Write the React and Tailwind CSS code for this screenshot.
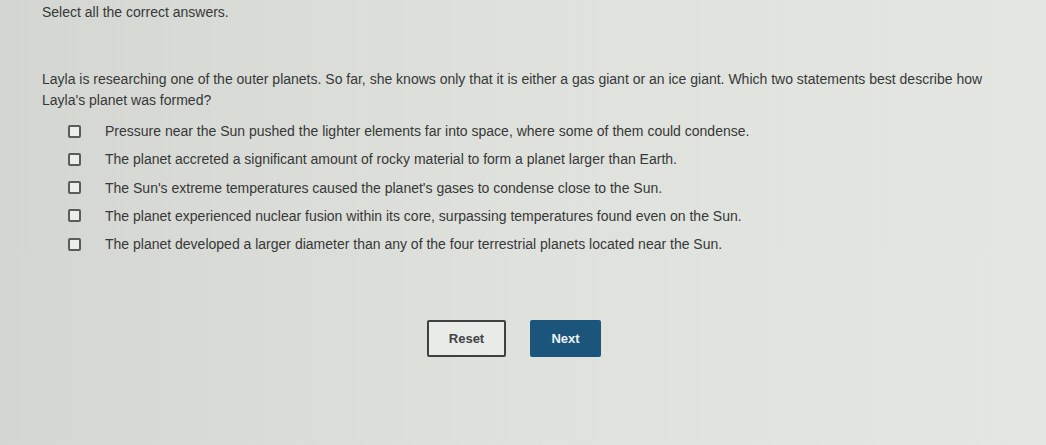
import React from "react";

const options = [
  "Pressure near the Sun pushed the lighter elements far into space, where some of them could condense.",
  "The planet accreted a significant amount of rocky material to form a planet larger than Earth.",
  "The Sun's extreme temperatures caused the planet's gases to condense close to the Sun.",
  "The planet experienced nuclear fusion within its core, surpassing temperatures found even on the Sun.",
  "The planet developed a larger diameter than any of the four terrestrial planets located near the Sun.",
];

export default function App() {
  return (
    <div
      className="w-[1046px] h-[445px] overflow-hidden bg-gradient-to-r from-[#d4d6d1] via-[#dfe1dc] to-[#e4e6e2] text-[#363838] text-[14px]"
      style={{ fontFamily: '"Liberation Sans", Arial, sans-serif' }}
    >
      <div className="pl-[42px] pt-[2px]">
        <p className="leading-[20px]">Select all the correct answers.</p>
        <p className="mt-[47px] leading-[21px] w-[950px]">
          Layla is researching one of the outer planets. So far, she knows only that it is either a gas giant or an ice giant. Which two statements best describe how Layla's planet was formed?
        </p>
      </div>
      <div className="mt-[10px] pl-[68px] flex flex-col gap-[8.3px]">
        {options.map((o) => (
          <label key={o} className="flex items-center h-[20px]">
            <span className="w-[13px] h-[13px] border-2 border-[#5a5c5c] rounded-[2px] bg-[#eceeea]" />
            <span className="ml-[24px] leading-[20px]">{o}</span>
          </label>
        ))}
      </div>
      <div className="mt-[66px] flex justify-center gap-[24px] pr-[18px]">
        <button className="w-[79px] h-[37px] border-2 border-[#3e4142] rounded-[2px] bg-[#e9ebe8] font-bold text-[13px] text-[#404345]">
          Reset
        </button>
        <button className="w-[71px] h-[37px] rounded-[2px] bg-[#1c557b] font-bold text-[13px] text-[#eef2f4]">
          Next
        </button>
      </div>
    </div>
  );
}
